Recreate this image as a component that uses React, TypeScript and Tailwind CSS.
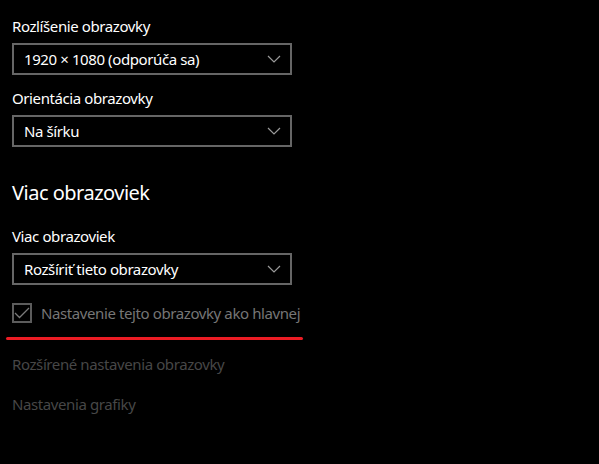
const font = { fontFamily: '"Noto Sans", "Segoe UI", sans-serif' };

function Dropdown({ value }: { value: string }) {
  return (
    <div className="mt-[7px] flex h-8 w-[280px] items-center justify-between border-2 border-[#666666] bg-black pl-[10px] pr-[8px]">
      <span className="text-[15px] leading-5 tracking-[-0.4px] text-white">{value}</span>
      <svg width="14" height="8" viewBox="0 0 14 8" className="mr-[1px]">
        <path d="M1 1 L7 7 L13 1" fill="none" stroke="#9a9a9a" strokeWidth="1.2" />
      </svg>
    </div>
  );
}

function Label({ children, className = "" }: { children: string; className?: string }) {
  return <div className={`text-[15px] leading-5 tracking-[-0.4px] text-white ${className}`}>{children}</div>;
}

export default function App() {
  return (
    <div className="h-[464px] w-[599px] overflow-hidden bg-black px-3 pt-4" style={font}>
      <Label>Rozlíšenie obrazovky</Label>
      <Dropdown value="1920 × 1080 (odporúča sa)" />

      <Label className="mt-[13px]">Orientácia obrazovky</Label>
      <Dropdown value="Na šírku" />

      <div className="mt-8 text-[20px] leading-7 tracking-[-0.5px] text-white">Viac obrazoviek</div>

      <Label className="mt-[19px]">Viac obrazoviek</Label>
      <Dropdown value="Rozšíriť tieto obrazovky" />

      <div className="mt-[18px] flex items-center gap-[9px]">
        <div className="flex h-5 w-5 items-center justify-center border-2 border-[#5c5c5c]">
          <svg width="16" height="12" viewBox="0 0 16 12">
            <path d="M1 6 L5.5 10.5 L15 1" fill="none" stroke="#7a7a7a" strokeWidth="1.3" />
          </svg>
        </div>
        <span className="text-[15px] leading-5 tracking-[-0.4px] text-[#767676]">Nastavenie tejto obrazovky ako hlavnej</span>
      </div>

      <div className="-ml-1.5 mt-[14px] h-[3px] w-[297px] rounded-full bg-[#ec1c24]" />

      <div className="mt-[14px] text-[15px] leading-5 tracking-[-0.4px] text-[#474747]">Rozšírené nastavenia obrazovky</div>
      <div className="mt-5 text-[15px] leading-5 tracking-[-0.4px] text-[#474747]">Nastavenia grafiky</div>
    </div>
  );
}
